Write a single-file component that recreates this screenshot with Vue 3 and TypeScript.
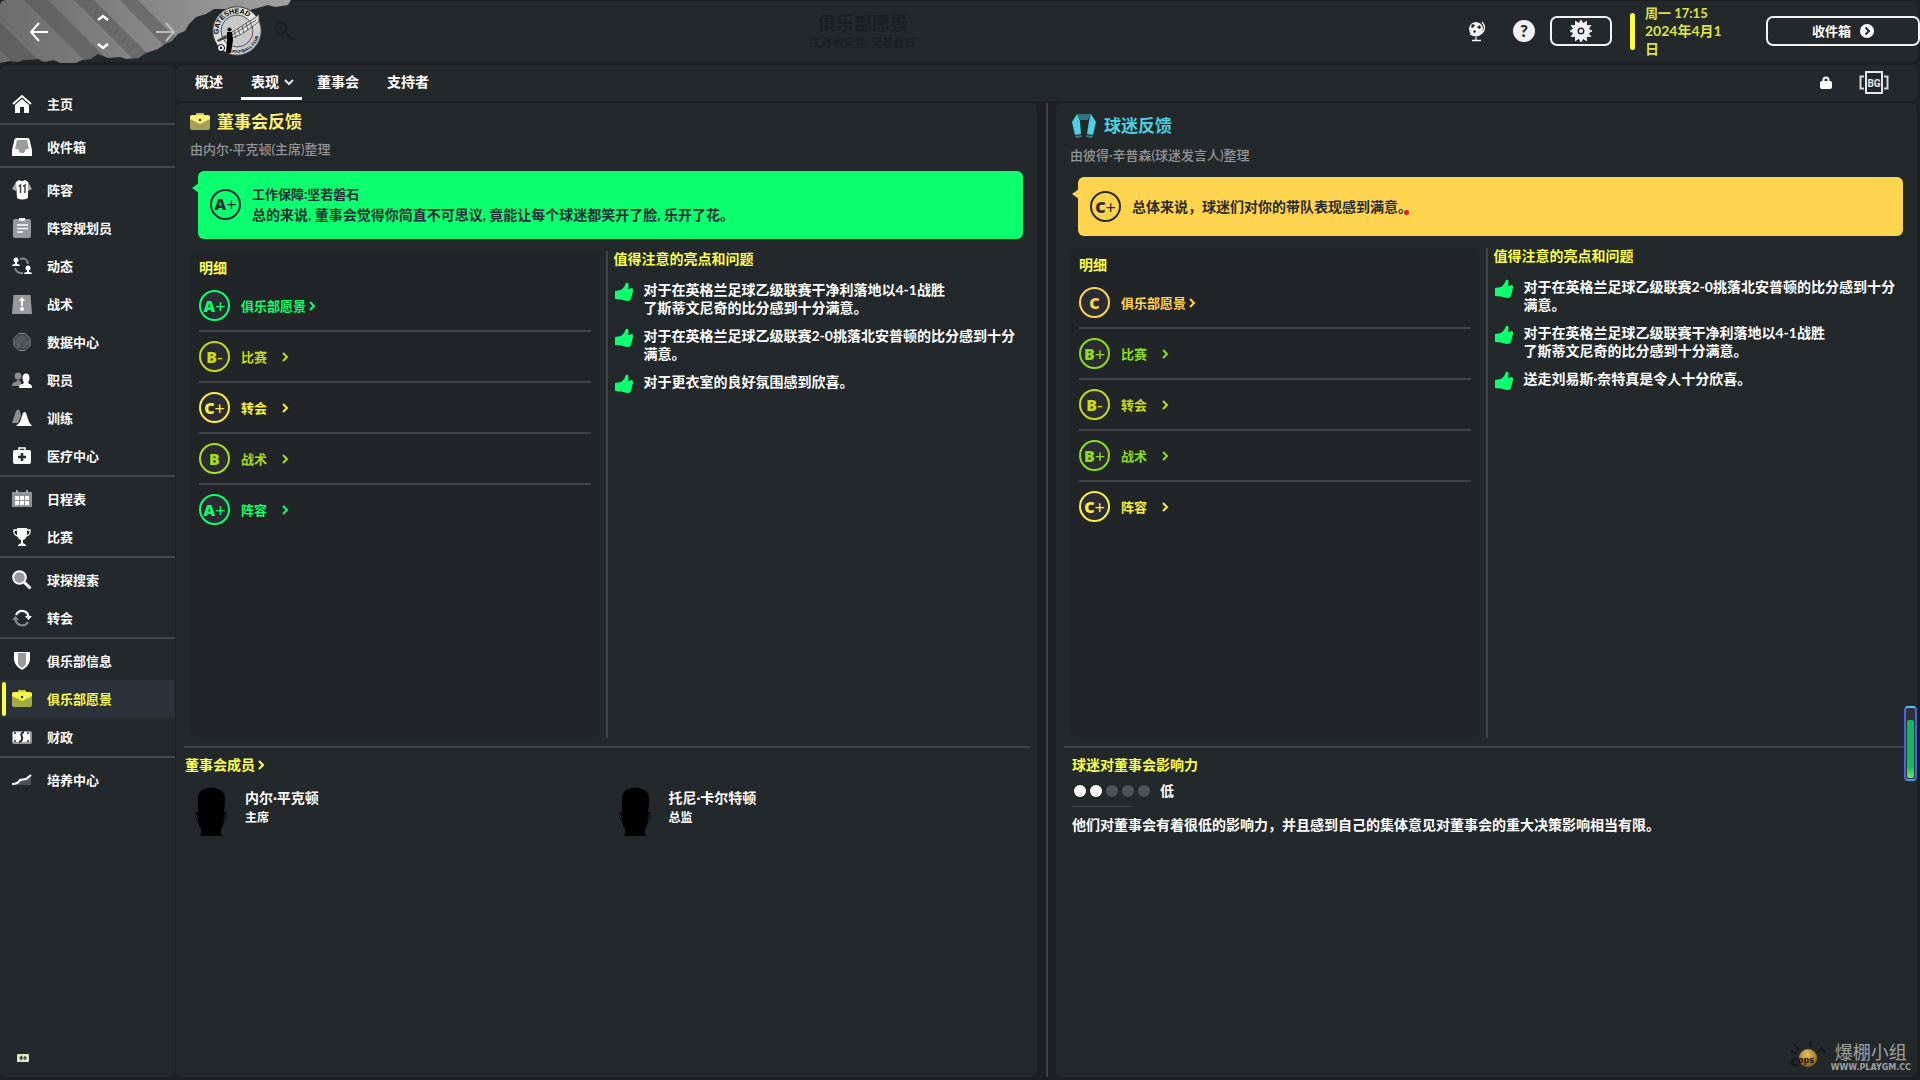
<script setup lang="ts">
interface NavItem {
  label: string
  icon: string
  active?: boolean
}
interface Grade {
  letter: string
  sign: string
  label: string
  color: string
}
interface Panel {
  kind: 'board' | 'fans'
  title: string
  compiled: string
  grade: { letter: string; sign: string }
  security?: string
  summary: string
  grades: Grade[]
  notes: string[][]
}

const icons: Record<string, string> = {
  home: '<path d="M1 10 10 2l9 8" fill="none" stroke="#fff" stroke-width="2"/><path d="M3 11l7-6 7 6v8h-5v-6H8v6H3z" fill="#fff"/>',
  inbox: '<path d="M4 1h12q1 0 1.500 1.500L20 13v6H0v-6L2.500 2.500Q3 1 4 1z" fill="#fff"/><path d="M5 3h10l2 9h-3l-2 4H8l-2-4H3z" fill="#9a9c9d"/>',
  shirt: '<path d="M4 2L0 9l4 2 1-4zM16 2l4 7-4 2-1-4z" fill="#a9abac"/><path d="M4 2l3-2q3 2 6 0l3 2v16q-6 3-11 0z" fill="#fff"/><path d="M6.500 6.500L8.500 5v8M11 6.500L13 5v8" fill="none" stroke="#444" stroke-width="1.500"/>',
  clipboard: '<rect x="1" y="1" width="18" height="19" rx="2" fill="#97999a"/><rect x="7" y="0" width="6" height="3" fill="#fff"/><path d="M5 7h11M5 10.500h11M5 14h6" stroke="#fff" stroke-width="1.300"/>',
  dynamics: '<circle cx="4" cy="4" r="2.500" fill="#fff"/><path d="M0 10q0-2 3-2V5h2v3q3 0 3 2z" fill="#fff"/><circle cx="16" cy="12" r="2.500" fill="#fff"/><path d="M12 18q0-2 3-2v-3h2v3q3 0 3 2z" fill="#fff"/><path d="M8 3q7-2 8 5M3 12q2 6 8 5" fill="none" stroke="#85888a" stroke-width="2"/>',
  tactics: '<path d="M1.500 1h17L20 20H0z" fill="#97999a"/><path d="M10 12V5" stroke="#fff" stroke-width="2"/><path d="M7 7l3-4 3 4z" fill="#fff"/><circle cx="10" cy="15" r="2" fill="#fff"/>',
  data: '<path d="M7 1.500h6l5 5v7l-5 5H7l-5-5v-7z" fill="#34393c" stroke="#909394"/><circle cx="10" cy="10" r="7" fill="#55595c"/><path d="M10 17V12l4-5 2-1" fill="none" stroke="#3b4043"/>',
  staff: '<circle cx="6" cy="6" r="3.500" fill="#8b8e8f"/><path d="M0 16q0-4 4-4l2-3 3 3v4z" fill="#8b8e8f"/><ellipse cx="14" cy="8" rx="3.500" ry="4.500" fill="#fff"/><path d="M7 18q0-4 4-4l1-2h4l1 2q3 0 3 4z" fill="#fff"/>',
  training: '<path d="M1 12l3-9q2-3 4 0l1 5-3 7H0z" fill="#8b8e8f"/><path d="M8 14l3-9q1.500-2 3 0l3 9 3 4H4z" fill="#fff"/>',
  medical: '<path d="M7 4V2h6v2" fill="none" stroke="#fff" stroke-width="1.500"/><rect x="1" y="4" width="18" height="14" rx="2" fill="#fff"/><path d="M10 7v8M6 11h8" stroke="#23282b" stroke-width="2.500"/>',
  calendar: '<rect x="0" y="3" width="20" height="15" fill="#929596"/><path d="M5 1v3M15 1v3" stroke="#c8c9ca" stroke-width="1.500"/><path d="M3 7h4v4H3zM8 7h4v4H8zM13 7h4v4h-4zM3 12h4v4H3zM8 12h4v4H8zM13 12h4v4h-4z" fill="#fff"/>',
  trophy: '<path d="M5 1h10v5q0 6-4 7v3l3 2v1H6v-1l3-2v-3Q5 12 5 6z" fill="#fff"/><path d="M5 3H2q-1 5 4 6M15 3h3q1 5-4 6" fill="none" stroke="#fff" stroke-width="1.300"/>',
  search: '<path d="M12.500 12.500l6 6" stroke="#fff" stroke-width="3"/><circle cx="7.500" cy="7.500" r="6.300" fill="#97999a" stroke="#fff" stroke-width="2"/>',
  transfer: '<path d="M4 7q3-6 9-3.500 3 1.500 3.500 5" fill="none" stroke="#fff" stroke-width="2.200"/><path d="M13 8h7l-3.500 4z" fill="#fff"/><path d="M16 14q-3 5-9 2.500-3-1.500-3.500-5" fill="none" stroke="#85888a" stroke-width="2.200"/><path d="M0 12h7L3.500 8z" fill="#85888a"/>',
  shield: '<path d="M2 1h16v8q-1 6-8 10Q3 15 2 9z" fill="#fff"/><path d="M6 2h8v11q-1 2-4 4-3-2-4-4z" fill="#97999a"/>',
  briefcase: '<path d="M7 4V2h6v2" fill="none" stroke="currentColor" stroke-width="1.500"/><path d="M0 7v9q0 2 2 2h16q2 0 2-2V7z" fill="currentColor" opacity=".6"/><path d="M0 5q0-2 2-2h16q2 0 2 2v2l-10 5L0 7z" fill="currentColor"/><circle cx="10" cy="8" r="1.200" fill="#23282b"/>',
  finance: '<rect x="0" y="4" width="20" height="13" rx="2" fill="#96999a"/><rect x="1" y="5" width="17" height="10" rx="1" fill="#fff"/><path d="M12 5q-4 1-2 5 1 4-3 5" fill="none" stroke="#23282b" stroke-width="2"/><path d="M2 6h2M2 14h2M15 6h2M15 14h2" stroke="#23282b" stroke-width="1.500"/>',
  growth: '<path d="M1 15l5-2 4-4 5-1 4-4v11z" fill="#4c5053"/><path d="M0 14q6 0 8-4l6-1 5-4" fill="none" stroke="#fff" stroke-width="2"/>',
}

const groups: NavItem[][] = [
  [{ label: '主页', icon: 'home' }],
  [{ label: '收件箱', icon: 'inbox' }],
  [
    { label: '阵容', icon: 'shirt' },
    { label: '阵容规划员', icon: 'clipboard' },
    { label: '动态', icon: 'dynamics' },
    { label: '战术', icon: 'tactics' },
    { label: '数据中心', icon: 'data' },
    { label: '职员', icon: 'staff' },
    { label: '训练', icon: 'training' },
    { label: '医疗中心', icon: 'medical' },
  ],
  [
    { label: '日程表', icon: 'calendar' },
    { label: '比赛', icon: 'trophy' },
  ],
  [
    { label: '球探搜索', icon: 'search' },
    { label: '转会', icon: 'transfer' },
  ],
  [
    { label: '俱乐部信息', icon: 'shield' },
    { label: '俱乐部愿景', icon: 'briefcase', active: true },
    { label: '财政', icon: 'finance' },
  ],
  [{ label: '培养中心', icon: 'growth' }],
]

const tabs = [
  { label: '概述' },
  { label: '表现', active: true },
  { label: '董事会' },
  { label: '支持者' },
]

const C = { aPlus: '#0bff6e', bPlus: '#8cdd1c', b: '#a6dd1c', bMinus: '#c5dc12', cPlus: '#fbee45', c: '#ffd54f' }

const panels: Panel[] = [
  {
    kind: 'board',
    title: '董事会反馈',
    compiled: '由内尔·平克顿(主席)整理',
    grade: { letter: 'A', sign: '+' },
    security: '工作保障:坚若磐石',
    summary: '总的来说, 董事会觉得你简直不可思议, 竟能让每个球迷都笑开了脸, 乐开了花。',
    grades: [
      { letter: 'A', sign: '+', label: '俱乐部愿景', color: C.aPlus },
      { letter: 'B', sign: '-', label: '比赛', color: C.bMinus },
      { letter: 'C', sign: '+', label: '转会', color: C.cPlus },
      { letter: 'B', sign: '', label: '战术', color: C.b },
      { letter: 'A', sign: '+', label: '阵容', color: C.aPlus },
    ],
    notes: [
      ['对于在英格兰足球乙级联赛干净利落地以4-1战胜', '了斯蒂文尼奇的比分感到十分满意。'],
      ['对于在英格兰足球乙级联赛2-0挑落北安普顿的比分感到十分', '满意。'],
      ['对于更衣室的良好氛围感到欣喜。'],
    ],
  },
  {
    kind: 'fans',
    title: '球迷反馈',
    compiled: '由彼得·辛普森(球迷发言人)整理',
    grade: { letter: 'C', sign: '+' },
    summary: '总体来说，球迷们对你的带队表现感到满意。',
    grades: [
      { letter: 'C', sign: '', label: '俱乐部愿景', color: C.c },
      { letter: 'B', sign: '+', label: '比赛', color: C.bPlus },
      { letter: 'B', sign: '-', label: '转会', color: C.bMinus },
      { letter: 'B', sign: '+', label: '战术', color: C.bPlus },
      { letter: 'C', sign: '+', label: '阵容', color: C.cPlus },
    ],
    notes: [
      ['对于在英格兰足球乙级联赛2-0挑落北安普顿的比分感到十分', '满意。'],
      ['对于在英格兰足球乙级联赛干净利落地以4-1战胜', '了斯蒂文尼奇的比分感到十分满意。'],
      ['送走刘易斯·奈特真是令人十分欣喜。'],
    ],
  },
]

const members = [
  { name: '内尔·平克顿', role: '主席' },
  { name: '托尼·卡尔特顿', role: '总监' },
]
const influence = 2
const gearTeeth = [0, 30, 60, 90, 120, 150, 180, 210, 240, 270, 300, 330]
</script>

<template>
  <div class="app" lang="zh-CN">
    <header class="top">
      <svg class="torn" viewBox="0 0 292 64" aria-hidden="true">
        <defs>
          <linearGradient id="tornFill" x1="0" x2="1" y1="0" y2="0">
            <stop offset="0" stop-color="#6c6c6c" />
            <stop offset="0.5" stop-color="#868686" />
            <stop offset="1" stop-color="#a2a2a2" />
          </linearGradient>
          <clipPath id="tornClip">
            <path d="M0 6Q0 0 6 0H291L288 5 275 7 268 5 250 10 240 7 228 9 214 9 206 14 196 17 189 24 185 31 178 34 172 41 165 44 158 49 146 53 138 58 126 59 120 57 108 58 98 54 90 59 82 60 76 63 60 63 54 60 44 62 38 59 24 60 18 62 10 61 0 63z" />
          </clipPath>
        </defs>
        <g clip-path="url(#tornClip)">
          <rect width="292" height="64" fill="url(#tornFill)" />
          <path d="M24 0H48L112 64H88zM74 0H94L158 64H138zM120 0H138L202 64H182zM0 22L42 64H14L0 50z" fill="#4d4d4d" opacity=".45" />
        </g>
      </svg>
      <div class="history">
        <button type="button" aria-label="后退">
          <svg width="20" height="20" viewBox="0 0 20 20"><path d="M19 10H2M10 1L2 10l8 9" fill="none" stroke="#fff" stroke-width="2" /></svg>
        </button>
        <div class="updown">
          <button type="button" aria-label="上一个"><svg width="12" height="8" viewBox="0 0 12 8"><path d="M1 6l5-4 5 4" fill="none" stroke="#fff" stroke-width="2.500" /></svg></button>
          <button type="button" aria-label="下一个"><svg width="12" height="8" viewBox="0 0 12 8"><path d="M1 2l5 4 5-4" fill="none" stroke="#fff" stroke-width="2.500" /></svg></button>
        </div>
        <button type="button" aria-label="前进">
          <svg width="20" height="20" viewBox="0 0 20 20"><path d="M0 10h17M10 1l8 9-8 9" fill="none" stroke="#bcbcbc" stroke-width="2" /></svg>
        </button>
      </div>
      <svg class="crest" viewBox="0 0 50 50" role="img" aria-label="Gateshead">
        <defs>
          <linearGradient id="silver" x1="0" x2="1" y1="0" y2="1">
            <stop offset="0" stop-color="#bdbdbd" />
            <stop offset="0.5" stop-color="#e9e9e9" />
            <stop offset="1" stop-color="#a9a9a9" />
          </linearGradient>
          <path id="arcTop" d="M6.800 28.200A18.500 18.500 0 0 1 43.200 21.800" />
          <path id="arcBottom" d="M20 46.400A22 22 0 0 0 47 25" />
        </defs>
        <circle cx="25" cy="25" r="24.300" fill="url(#silver)" stroke="#3a3a3a" />
        <circle cx="25" cy="25" r="16" fill="#c9c9c9" stroke="#333" stroke-width=".8" />
        <path d="M11 32L44 11l3-3v7L44 18 30 28 20 32z" fill="#ddd" stroke="#333" stroke-width=".7" />
        <path d="M22 25l2 7M26 22l2 7M30 20l2 7M34 17l2 7M38 15l2 7M20 29l24-15" stroke="#333" stroke-width=".7" />
        <path d="M14 29l-9 5 1 2 9-4z" fill="#444" />
        <circle cx="17.500" cy="23.500" r="2" fill="#000" />
        <path d="M15 26h5l1 8-2 13h-5l1-12z" fill="#000" />
        <circle cx="9" cy="42" r="3.500" fill="#fff" stroke="#000" />
        <circle cx="9" cy="42" r="1.200" fill="#000" />
        <text class="crest-top"><textPath href="#arcTop">GATESHEAD</textPath></text>
        <text class="crest-bottom"><textPath href="#arcBottom">FOOTBALL CLUB</textPath></text>
      </svg>
      <button class="find" type="button" aria-label="搜索">
        <svg width="20" height="20" viewBox="0 0 20 20"><circle cx="7" cy="7" r="5.500" fill="#202527" stroke="#1b1f21" stroke-width="2" /><path d="M12 12l6 6" stroke="#1b1f21" stroke-width="3" /></svg>
      </button>
      <div class="heading">
        <h1>俱乐部愿景</h1>
        <p>工作稳定性: 坚若磐石</p>
      </div>
      <div class="tools">
        <button class="plain globe" type="button" aria-label="世界">
          <svg width="20" height="22" viewBox="0 0 20 22"><circle cx="9" cy="9" r="7" fill="#f2f2f2" /><path d="M5 4l3 1-2 3-2-1zM10 7l3-2 1 3-2 1zM6 11l2-1 1 2-2 1zM10 3l3-1v1z" fill="#23282b" /><path d="M15 2q5 6 0 11-5 5-12 1M9 17v3M5 20.500h9" fill="none" stroke="#f2f2f2" stroke-width="1.300" /></svg>
        </button>
        <button class="plain help" type="button" aria-label="帮助">?</button>
        <button class="boxed gear" type="button" aria-label="设置">
          <svg width="24" height="24" viewBox="0 0 24 24">
            <path v-for="a in gearTeeth" :key="a" d="M10.500 4L12 1l1.500 3z" fill="#f2f2f2" stroke="#f2f2f2" :transform="`rotate(${a} 12 12)`" />
            <circle cx="12" cy="12" r="6" fill="none" stroke="#f2f2f2" stroke-width="5" />
            <circle cx="12" cy="12" r="2" fill="#f2f2f2" />
          </svg>
        </button>
        <div class="date">
          <span class="time">周一 17:15</span>
          <span>2024年4月1<br />日</span>
        </div>
        <button class="boxed mail" type="button">
          <span>收件箱</span>
          <svg width="14" height="14" viewBox="0 0 14 14"><circle cx="7" cy="7" r="7" fill="#fff" /><path d="M5.500 3.500L9 7l-3.500 3.500" fill="none" stroke="#23282b" stroke-width="2" /></svg>
        </button>
      </div>
    </header>

    <div class="body">
      <nav class="side" aria-label="主导航">
        <ul v-for="(group, g) in groups" :key="g">
          <li v-for="item in group" :key="item.label">
            <a href="#" :class="{ active: item.active }">
              <svg width="20" height="20" viewBox="0 0 20 20" aria-hidden="true" v-html="icons[item.icon]"></svg>
              <span>{{ item.label }}</span>
            </a>
          </li>
        </ul>
        <button class="collapse" type="button" aria-label="收起侧栏">
          <svg width="12" height="8" viewBox="0 0 12 8"><rect width="12" height="8" rx="1" fill="#dfe8c4" /><path d="M10 4H3M5 2L3 4l2 2M8 2v4" fill="none" stroke="#2d3a22" stroke-width="1.200" /></svg>
        </button>
      </nav>

      <div class="content">
        <nav class="tabs" aria-label="页面">
          <a v-for="tab in tabs" :key="tab.label" href="#" :class="{ active: tab.active }">
            {{ tab.label }}
            <svg v-if="tab.active" width="10" height="8" viewBox="0 0 10 8"><path d="M1 2l4 4 4-4" fill="none" stroke="#e4e4e4" stroke-width="2" /></svg>
          </a>
          <div class="tab-tools">
            <svg width="12" height="14" viewBox="0 0 12 14" role="img" aria-label="锁定"><path d="M3.500 6V4q0-2.500 2.500-2.500T8.500 4v2" fill="none" stroke="#fff" stroke-width="2" /><rect x="0" y="5" width="12" height="8" rx="2" fill="#fff" /></svg>
            <svg width="30" height="24" viewBox="0 0 30 24" role="img" aria-label="BG">
              <path d="M5 5.500H1.500v12H5M25 5.500h3.500v12H25" fill="none" stroke="#d8d8d8" stroke-width="2" />
              <rect x="7" y="1" width="16" height="21" fill="none" stroke="#e8e8e8" stroke-width="2" />
              <text x="15" y="16" class="bg-mark">BG</text>
            </svg>
          </div>
        </nav>

        <main class="panels">
          <section v-for="p in panels" :key="p.kind" class="panel" :class="p.kind">
            <div class="upper">
              <h2>
                <svg v-if="p.kind === 'board'" width="20" height="20" viewBox="0 0 20 20" v-html="icons.briefcase"></svg>
                <svg v-else width="24" height="24" viewBox="0 0 24 24"><path d="M5 0h14l-3 6H8z" fill="#33757f" /><path d="M5 0L0 8l3 13 6-1-1-13zM19 0l5 8-3 13-6-1 2-13z" fill="#4dd0e1" /><path d="M3 22l7-1v2l-6 1zM21 22l-7-1v2l6 1z" fill="#33757f" /></svg>
                {{ p.title }}
              </h2>
              <p class="compiled">{{ p.compiled }}</p>
              <div class="banner">
                <span class="grade"><b>{{ p.grade.letter }}</b><i>{{ p.grade.sign }}</i></span>
                <div>
                  <p v-if="p.security" class="security">{{ p.security }}</p>
                  <p>{{ p.summary }}<span v-if="p.kind === 'fans'" class="cursor"></span></p>
                </div>
              </div>
              <div class="columns">
                <div class="details">
                  <div class="inset">
                    <h3>明细</h3>
                    <ul>
                      <li v-for="g in p.grades" :key="g.label">
                        <a href="#" :style="{ color: g.color }">
                          <span class="grade"><b>{{ g.letter }}</b><i v-if="g.sign">{{ g.sign }}</i></span>
                          <span class="label">{{ g.label }}</span>
                          <svg width="8" height="12" viewBox="0 0 8 12"><path d="M1 2l4 4-4 4" fill="none" stroke="currentColor" stroke-width="2" /></svg>
                        </a>
                      </li>
                    </ul>
                  </div>
                </div>
                <div class="notes">
                  <h3>值得注意的亮点和问题</h3>
                  <ul>
                    <li v-for="(n, i) in p.notes" :key="i">
                      <svg width="20" height="20" viewBox="0 0 20 20"><path d="M1 9l6-1q4-3 5-7 3-1 2.500 3l-.500 3 4-1q1.500.500 1 3l-2 8q-1 2.500-4 2l-6-1.500L1 17z" fill="#0bff6e" /></svg>
                      <p><template v-for="(line, k) in n" :key="k"><br v-if="k" />{{ line }}</template></p>
                    </li>
                  </ul>
                </div>
              </div>
            </div>

            <div v-if="p.kind === 'board'" class="lower">
              <h3><a href="#">董事会成员<svg width="8" height="12" viewBox="0 0 8 12"><path d="M1 2l4 4-4 4" fill="none" stroke="currentColor" stroke-width="2" /></svg></a></h3>
              <ul class="members">
                <li v-for="m in members" :key="m.name">
                  <svg width="34" height="50" viewBox="0 0 34 50" aria-hidden="true"><path d="M3 16Q2 3 10 2q6-3 13 0 8 2 7 14l-1 10q3-3 3 1 0 6-3 7-1 6-3 8v5l2 2H5l1-2v-5q-2-2-3-8-3-1-3-7 0-4 3-1z" fill="#000" /><path d="M1 26q0 5 2 7M31 26q0 5-2 7" fill="none" stroke="#3a3a3a" /></svg>
                  <div>
                    <p>{{ m.name }}</p>
                    <p class="role">{{ m.role }}</p>
                  </div>
                </li>
              </ul>
            </div>
            <div v-else class="lower">
              <h3>球迷对董事会影响力</h3>
              <div class="rating">
                <span v-for="n in 5" :key="n" class="dot" :class="{ on: n <= influence }"></span>
                <span class="level">低</span>
              </div>
              <p class="effect">他们对董事会有着很低的影响力，并且感到自己的集体意见对董事会的重大决策影响相当有限。</p>
            </div>
          </section>
        </main>
      </div>
    </div>

    <div class="gauge" aria-hidden="true"><span></span></div>
    <div class="brand">
      <svg width="38" height="34" viewBox="0 0 38 34" aria-hidden="true">
        <defs><radialGradient id="ball" cx=".45" cy=".3" r=".7"><stop offset="0" stop-color="#e8c06a" /><stop offset="1" stop-color="#8a5f14" /></radialGradient></defs>
        <path d="M5 6l4 5M21 2l-1 6M1 12l6 3M27 14l6-4M31 8l4 5M8 19q-7 1-6 6l6 2" fill="none" stroke="#14181a" stroke-width="2" />
        <circle cx="18" cy="19" r="9" fill="url(#ball)" />
        <text x="16" y="24" class="ball-text">ops</text>
      </svg>
      <div>
        <strong>爆棚小组</strong>
        <small>WWW.PLAYGM.CC</small>
      </div>
    </div>
  </div>
</template>

<style>
body {
  background: #1d1f20;
}
</style>

<style scoped>
* {
  box-sizing: border-box;
}
.app {
  position: relative;
  display: flex;
  flex-direction: column;
  gap: 3px;
  min-height: 100vh;
  padding: 1px 2px 3px 0;
  background: #1d1f20;
  color: #fff;
  font-family: Lato, "Noto Sans CJK SC", sans-serif;
  font-size: 14px;
  font-weight: 700;
  line-height: 18px;
}
ul, p, h1, h2, h3 {
  margin: 0;
  padding: 0;
  list-style: none;
  font-size: 14px;
  font-weight: 700;
}
a {
  color: inherit;
  text-decoration: none;
}
button {
  padding: 0;
  border: 0;
  background: none;
  color: inherit;
  font: inherit;
  cursor: pointer;
}
svg {
  display: block;
  flex: none;
}

/* header */
.top {
  position: relative;
  display: flex;
  align-items: center;
  height: 61px;
  padding-bottom: 2px;
  background: #23282b;
  border-radius: 6px;
}
.torn {
  position: absolute;
  left: 0;
  top: -1px;
  width: 292px;
  height: 64px;
}
.history {
  position: relative;
  display: flex;
  align-items: center;
  justify-content: space-between;
  width: 176px;
  padding: 2px 0 0 29px;
}
.updown {
  display: flex;
  flex-direction: column;
  gap: 20px;
}
.crest {
  position: relative;
  width: 50px;
  height: 50px;
  margin-left: 36px;
}
.crest-top {
  font: 700 7px "Liberation Sans", sans-serif;
}
.crest-bottom {
  font: 700 4px "Liberation Sans", sans-serif;
}
.find {
  margin-left: 12px;
}
.heading {
  position: absolute;
  left: 0;
  right: 0;
  top: 10px;
  width: 300px;
  margin: 0 auto;
  padding-right: 192px;
  box-sizing: content-box;
  color: #1b1f21;
  text-align: center;
}
.heading h1 {
  font-size: 18px;
  line-height: 24px;
}
.heading p {
  font-size: 11px;
  line-height: 16px;
}
.tools {
  display: flex;
  align-items: center;
  margin-left: auto;
}
.help {
  width: 22px;
  height: 22px;
  margin: 0 15px 0 26px;
  border-radius: 50%;
  background: #f2f2f2;
  color: #23282b;
  font-size: 17px;
  font-weight: 900;
}
.boxed {
  display: flex;
  align-items: center;
  justify-content: center;
  height: 30px;
  border: 2px solid #f2f2f2;
  border-radius: 7px;
}
.gear {
  width: 62px;
  margin-right: 18px;
}
.date {
  display: flex;
  flex-direction: column;
  width: 118px;
  height: 54px;
  padding-left: 15px;
  color: #dfe344;
  position: relative;
}
.date::before {
  content: "";
  position: absolute;
  left: 0;
  top: 9px;
  width: 5px;
  height: 37px;
  border-radius: 3px;
  background: #ffff3d;
}
.time {
  font-size: 13px;
}
.mail {
  width: 154px;
  gap: 9px;
  margin: 0 -2px 0 18px;
  font-size: 13px;
}

/* frame */
.body {
  display: flex;
  flex: 1;
  gap: 1px;
}
.side {
  display: flex;
  flex-direction: column;
  width: 175px;
  padding-top: 20px;
  background: #23282b;
  border-radius: 6px;
}
.side ul {
  font-size: 13px;
}
.side ul + ul {
  padding-top: 3px;
  border-top: 2px solid #45494b;
}
.side a {
  position: relative;
  display: flex;
  align-items: center;
  gap: 15px;
  height: 38px;
  padding-left: 12px;
}
.side a.active {
  background: #2a3138;
  color: #f8fb4b;
}
.side a.active::before {
  content: "";
  position: absolute;
  left: 2px;
  top: 2px;
  bottom: 2px;
  width: 4px;
  border-radius: 2px;
  background: #ffff3d;
}
.collapse {
  margin: auto auto 15px 17px;
}
.content {
  display: flex;
  flex: 1;
  flex-direction: column;
  gap: 2px;
  min-width: 0;
}
.tabs {
  display: flex;
  align-items: stretch;
  gap: 8px;
  height: 36px;
  padding-left: 12px;
  background: #23282b;
  border-radius: 6px;
}
.tabs a {
  display: flex;
  align-items: center;
  gap: 5px;
  padding: 0 10px 2px;
}
.tabs a:first-child {
  padding-left: 7px;
}
.tabs a.active {
  margin: 0 -3px 1px 0;
  padding: 1px 8px 0 10px;
  border-bottom: 3px solid #fff;
}
.tab-tools {
  display: flex;
  align-items: center;
  gap: 27px;
  margin: 0 29px 0 auto;
}
.bg-mark {
  fill: #e8e8e8;
  font: 700 10px "Roboto", sans-serif;
  text-anchor: middle;
}

/* panels */
.panels {
  position: relative;
  display: grid;
  grid-template-columns: 1fr 1fr;
  gap: 19px;
  flex: 1;
  padding-right: 1px;
}
.panels::before {
  content: "";
  position: absolute;
  left: 50%;
  top: 0;
  bottom: 0;
  width: 2px;
  margin-left: -1px;
  background: #404244;
}
.panel {
  display: grid;
  grid-template-rows: 66fr 34fr;
  min-width: 0;
  background: #23282b;
  border-radius: 6px;
}
.upper {
  display: flex;
  flex-direction: column;
  padding: 6px 10px 8px 14px;
}
h2 {
  display: flex;
  align-items: center;
  gap: 7px;
  height: 26px;
  font-size: 17px;
}
.board h2 {
  color: #fff176;
}
.fans h2 {
  height: 33px;
  gap: 8px;
  padding-left: 2px;
  color: #4dd0e1;
}
.compiled {
  margin-top: 5px;
  color: #939596;
  font-size: 13px;
  font-weight: 500;
}
.banner {
  position: relative;
  display: flex;
  align-items: center;
  gap: 11px;
  min-height: 68px;
  margin: 13px 4px 0 8px;
  padding: 0 12px 2px;
  background: #0bff6e;
  border-radius: 6px;
  color: #23303a;
}
.fans .compiled {
  margin-top: 4px;
}
.fans .banner {
  min-height: 59px;
  padding-bottom: 0;
  background: #ffd54f;
  color: #2a2c33;
}
.banner::before {
  content: "";
  position: absolute;
  left: -6px;
  top: 12px;
  border: 5px solid transparent;
  border-left-width: 0;
  border-right: 7px solid #0bff6e;
}
.fans .banner::before {
  border-right-color: #ffd54f;
}
.security {
  margin-bottom: 3px;
  font-size: 13px;
}
.cursor {
  position: absolute;
  width: 5px;
  height: 5px;
  margin: 12px 0 0 -8px;
  border-radius: 50%;
  background: #e8141c;
}
.grade {
  display: flex;
  flex: none;
  align-items: center;
  justify-content: center;
  width: 31px;
  height: 31px;
  border: 2px solid currentColor;
  border-radius: 50%;
  font-family: "Noto Sans", sans-serif;
  font-size: 16px;
}
.grade i {
  font-style: normal;
  font-size: 18px;
  font-weight: 400;
}
.columns {
  display: grid;
  flex: 1;
  grid-template-columns: 1fr 1fr;
  margin-top: 12px;
}
.details {
  display: flex;
  padding-right: 6px;
  border-right: 2px solid #404446;
  margin-right: 1px;
}
.inset {
  flex: 1;
  padding: 8px 9px;
  background: #222528;
  border-radius: 8px;
}
h3 {
  color: #fbff49;
}
.inset li + li {
  border-top: 2px solid #404446;
}
.inset ul {
  margin-top: 4px;
}
.inset a {
  display: flex;
  align-items: center;
  height: 49px;
  font-size: 13px;
}
.inset .grade {
  background: #2a2b33;
}
.label {
  min-width: 38px;
  margin: 0 3px 0 11px;
}
.notes {
  padding-left: 5px;
}
.notes h3 {
  line-height: 16px;
}
.notes ul {
  display: flex;
  flex-direction: column;
  gap: 10px;
  margin-top: 14px;
}
.notes li {
  display: flex;
  gap: 10px;
}
.notes li svg {
  margin-top: 1px;
}
.lower {
  margin: 0 7px 0 8px;
  padding: 8px 0 8px 1px;
  border-top: 2px solid #404446;
}
.fans .lower {
  margin-right: 13px;
  padding-left: 8px;
}
.lower h3 a {
  display: flex;
  align-items: center;
  gap: 3px;
}
.members {
  display: grid;
  grid-template-columns: 1fr 1fr;
  column-gap: 12px;
  margin-top: 13px;
  padding-left: 10px;
}
.members li {
  display: flex;
  gap: 16px;
}
.members p {
  line-height: 22px;
}
.members .role {
  font-size: 12px;
  line-height: 18px;
}
.rating {
  display: flex;
  align-items: center;
  gap: 4px;
  margin-top: 8px;
  padding-left: 2px;
}
.dot {
  width: 12px;
  height: 12px;
  border-radius: 50%;
  background: #4e5355;
}
.dot.on {
  background: #fff;
}
.level {
  margin-left: 6px;
}
.effect {
  position: relative;
  margin-top: 6px;
  padding-top: 10px;
}
.effect::before {
  content: "";
  position: absolute;
  left: 0;
  top: 0;
  width: 59px;
  height: 1px;
  background: #45494b;
}

/* floating pieces */
.gauge {
  position: absolute;
  right: 3px;
  top: 706px;
  display: flex;
  width: 13px;
  height: 75px;
  padding: 12px 1px 1px;
  border: 2px solid #4468d8;
  border-top-color: #5cc0f0;
  border-bottom-color: #3f9cf0;
  border-radius: 4px;
  background: #30303c;
}
.gauge span {
  flex: 1;
  border-radius: 2px;
  background: linear-gradient(#12b964 80%, #6fe86f);
}
.brand {
  position: absolute;
  right: 9px;
  bottom: 7px;
  display: flex;
  gap: 3px;
  align-items: center;
  color: #9ea1a2;
}
.brand div {
  display: flex;
  flex-direction: column;
  align-items: center;
}
.brand strong {
  font-size: 18px;
  font-weight: 400;
  line-height: 22px;
}
.brand small {
  font: 700 8px "DejaVu Sans", sans-serif;
}
.ball-text {
  fill: #1b1408;
  font: 700 8px "DejaVu Sans", sans-serif;
  text-anchor: middle;
}
</style>
